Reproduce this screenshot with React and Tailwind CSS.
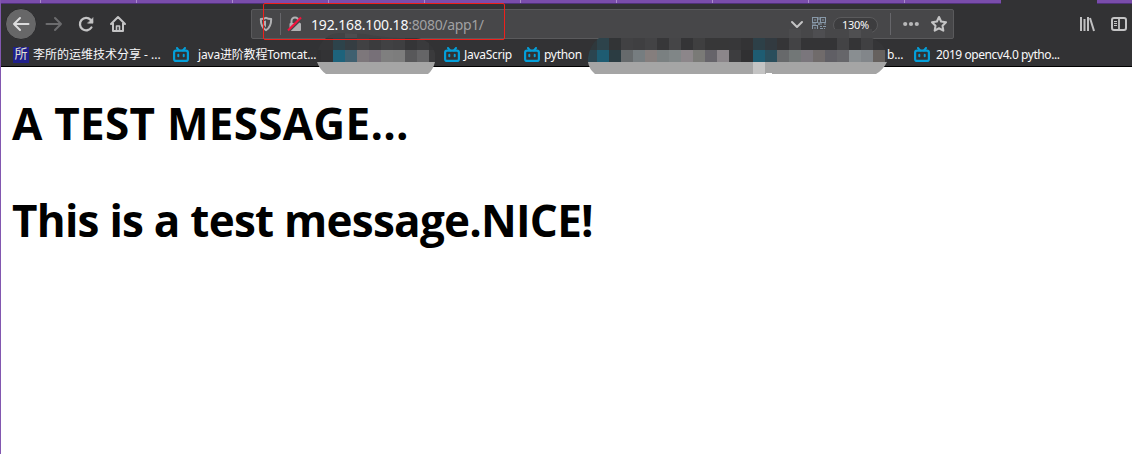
const TOP = [
  [585, "#2f383c"], [597, "#2d434b"], [609, "#323436"], [621, "#414143"], [633, "#3f3f41"], [645, "#434345"], [657, "#373739"], [669, "#454547"],
  [681, "#343436"], [693, "#3f3f40"], [705, "#373738"], [717, "#373738"], [729, "#373739"], [741, "#333335"], [753, "#2d4048"], [765, "#323a40"],
  [777, "#353537"], [789, "#434345"], [801, "#343436"], [813, "#343436"], [825, "#343436"], [837, "#434345"], [849, "#343436"], [861, "#404042"], [873, "#353537"],
];
const MID = [
  [585, "#2b4550"], [597, "#1e5c72"], [609, "#2b3c42"], [621, "#666a6c"], [633, "#767d80"], [645, "#857e7d"], [657, "#7a8081"], [669, "#808687"],
  [681, "#8c868a"], [693, "#7a7a77"], [705, "#66646a"], [717, "#8b868a"], [729, "#3d3d3f"], [741, "#303032"], [753, "#1e5c72"], [765, "#2a4e5c"],
  [777, "#67696b"], [789, "#727777"], [801, "#7a767c"], [813, "#706b6b"], [825, "#605f65"], [837, "#66666a"], [849, "#898e91"], [861, "#82868a"], [873, "#66615e"], [885, "#3a3a3c"],
];
const TOP1 = [
  [309, "#353537"], [321, "#353537"], [333, "#2d434b"], [345, "#353d42"], [357, "#414143"], [369, "#3b3b3d"], [381, "#414143"], [393, "#3f3f41"], [405, "#353537"], [417, "#3a3a3c"], [429, "#343436"],
];
const MID1 = [
  [309, "#303032"], [321, "#333335"], [333, "#1d637c"], [345, "#3f6070"], [357, "#7d777b"], [369, "#777078"], [381, "#7f7f7f"], [393, "#7d7d7d"], [405, "#58585a"], [417, "#656567"], [429, "#3a3a3c"],
];

function Tiles({ row, y }) {
  return row.map(([x, c]) => <rect key={x} x={x} y={y} width="12" height="12" fill={c} />);
}

function Mosaic() {
  return (
    <svg className="pointer-events-none absolute left-[-1px] top-0" width="1132" height="80" viewBox="0 0 1132 80" shapeRendering="crispEdges">
      <clipPath id="a"><path d="M317 55Q318 44 326 38Q331 33 341 33L365 34Q380 37 400 38H418Q432 41 435 53V62Q433 70 428 74H326Q320 70 317 62Z" /></clipPath>
      <g clipPath="url(#a)">
        <rect x="310" y="30" width="130" height="8" fill="#424244" />
        <rect x="345" y="32" width="12" height="6" fill="#4c4c4e" />
        <Tiles row={TOP1} y={38} />
        <Tiles row={MID1} y={50} />
        <rect x="310" y="62" width="130" height="12" fill="#a5a5a5" />
      </g>
      <clipPath id="b"><path d="M588 58Q590 44 599 38H780V29H872V38Q884 43 887 54V62Q883 70 876 74H595Q589 69 588 62Z" /></clipPath>
      <g clipPath="url(#b)">
        <rect x="580" y="28" width="310" height="10" fill="#474749" />
        <rect x="789" y="28" width="12" height="10" fill="#4b4b4d" />
        <rect x="813" y="30" width="12" height="8" fill="#4e4e51" />
        <rect x="849" y="30" width="12" height="8" fill="#4f4f51" />
        <Tiles row={TOP} y={38} />
        <Tiles row={MID} y={50} />
        <rect x="580" y="62" width="310" height="12" fill="#a5a5a5" />
        <rect x="753" y="62" width="12" height="12" fill="#c4c4c4" />
        <path d="M766 74v-1h4l3 1z" fill="#fff" />
      </g>
    </svg>
  );
}

function Bili() {
  return (
    <svg className="block shrink-0" width="16" height="16" viewBox="0 0 16 16" fill="none" stroke="#049fd9" strokeLinecap="round">
      <rect x="1.100" y="3.700" width="13.800" height="10.200" rx="2" strokeWidth="2.200" />
      <path d="M4 1 6 3.400M12 1 10 3.400M5.300 7.800v1.400M10.700 7.800v1.400" strokeWidth="2" />
    </svg>
  );
}

const stroke = { fill: "none", stroke: "#c4c4c5", strokeWidth: 2, strokeLinecap: "round", strokeLinejoin: "round" };

function NavBar() {
  return (
    <div className="flex h-[40px] items-center">
      <div className="ml-[4px] flex size-[32px] items-center justify-center rounded-full border border-[#2a2a2c] bg-[#676768]">
        <svg width="18" height="18" viewBox="0 0 18 18" {...stroke} stroke="#dcdcdd"><path d="M16.500 9H2M8 3 2 9l6 6" /></svg>
      </div>
      <svg className="ml-[8px]" width="18" height="18" viewBox="0 0 18 18" {...stroke} stroke="#6c6c6e"><path d="M1.500 9H16M10 3l6 6-6 6" /></svg>
      <svg className="ml-[14px]" width="18" height="18" viewBox="0 0 18 18" {...stroke} strokeWidth="2.300"><path d="M14.400 12.500A6.200 6.200 0 1 1 13.600 4.800L15 6.500" /><path d="M16 3v5.200h-5.200z" fill="#c4c4c5" strokeWidth="0.600" /></svg>
      <svg className="ml-[14px]" width="18" height="18" viewBox="0 0 18 18" {...stroke}><path d="M2 9 9 2l7 7M4 8v8h10V8" /><path d="M7.500 16v-5h3v5" strokeWidth="1.600" /></svg>
      <div className="ml-[124px] flex h-[30px] w-[703px] items-center rounded-[2px] border border-[#5a5a5c] bg-[#474749]">
        <svg className="ml-[6px]" width="16" height="16" viewBox="0 0 16 16" {...stroke} stroke="#b1b1b3"><path d="M8 1.800c1.800 1 3.600 1.200 5.200 1.200 0 6-1.200 9-5.200 11.200C4 12 2.800 9 2.800 3 4.400 3 6.200 2.800 8 1.800z" strokeWidth="2" /><path d="M8 4.600v6.800c-1.800-1.400-2.500-3.400-2.600-6.200z" fill="#b1b1b3" strokeWidth="0" /></svg>
        <div className="ml-[6px] h-[22px] w-px bg-[#66666a]" />
        <svg className="ml-[6px]" width="16" height="16" viewBox="0 0 16 16"><path d="M4.500 8V5a3.500 3.500 0 0 1 7 0v3" fill="none" stroke="#b1b1b3" strokeWidth="2" /><rect x="2.500" y="7" width="11.500" height="8" rx="1" fill="#b1b1b3" /><path d="M1 15.500 14.500 2.500" stroke="#474749" strokeWidth="3" /><path d="M1 14.500 14 1.500" stroke="#f5123e" strokeWidth="2.200" /></svg>
        <div className="ml-[8px] mt-[2px] whitespace-nowrap text-[14px] leading-[20px] tracking-[-0.250px] text-[#f9f9fa]"><span className="tracking-[-0.150px]">192.168.100.18</span><span className="tracking-[-0.350px] text-[#a0a0a2]">:8080/app1/</span></div>
        <div className="flex-1" />
        <svg width="14" height="14" viewBox="0 0 14 14" {...stroke}><path d="m2 5 5 5 5-5" /></svg>
        <svg className="ml-[8px]" width="14" height="14" viewBox="0 0 14 14" fill="none" stroke="#8798a8" strokeWidth="1.100"><path d="M.5.500h5v5h-5zM8.500.500h5v5h-5zM.5 8.500h5v5h-5zM2 3h2M10 3h2M2 11h2M7 0v3M7 5v3M0 7h4M6 7h4M12 7h2M8 9.500h2M11 9.500h3M8 11.500h3M8.500 13.500h2M12.500 11v3" /></svg>
        <div className="ml-[7px] mt-[2px] flex h-[16px] w-[45px] items-center justify-center rounded-full border border-[#5a5a5c] bg-[#3d3d3f] text-[11px] tracking-[-0.300px] text-[#f9f9fa]">130%</div>
        <div className="ml-[12px] h-[22px] w-px bg-[#66666a]" />
        <svg className="ml-[12px]" width="16" height="16" viewBox="0 0 16 16" fill="#b8b8b9"><circle cx="2.200" cy="8" r="2.100" /><circle cx="8" cy="8" r="2.100" /><circle cx="13.800" cy="8" r="2.100" /></svg>
        <svg className="ml-[11px] mr-[5px]" width="18" height="18" viewBox="0 0 18 18" {...stroke}><path d="m9 2 2.100 4.500 4.900.7-3.500 3.500.8 4.900L9 13.300l-4.300 2.300.8-4.900L2 7.200l4.900-.7z" strokeWidth="2.100" /></svg>
      </div>
      <svg className="ml-[125px]" width="16" height="16" viewBox="0 0 16 16" fill="none" stroke="#c0c0c1" strokeWidth="2"><path d="M2 1V15M5.500 3V15M9 1V15" /><path d="m11 2 4 13" /></svg>
      <svg className="ml-[16px]" width="16" height="16" viewBox="0 0 16 16" fill="none" stroke="#c4c4c5"><rect x="1" y="2" width="14" height="12" rx="2" strokeWidth="2" /><path d="M8 2v12" strokeWidth="1.800" /><path d="M3 5.500h3M3 7.500h3M3 9.500h3" /></svg>
    </div>
  );
}

export default function App() {
  return (
    <div className="relative h-[454px] w-[1132px] overflow-hidden border-l border-[#8257b0] bg-white font-['Noto_Sans','Noto_Sans_CJK_SC',sans-serif]">
      <div className="bg-[#323234]">
        <div className="flex h-[4px] border-b border-[#50327a] bg-[#7a4dab]">
          <div className="w-[40px] border-r border-[#a98acb]" />
          <div className="w-[96px] border-r border-[#a98acb]" />
          <div className="w-[96px] border-r border-[#a98acb]" />
          <div className="w-[96px] border-r border-[#a98acb]" />
          <div className="w-[96px] border-r border-[#a98acb]" />
          <div className="w-[96px] border-r border-[#a98acb]" />
          <div className="w-[96px] border-r border-[#a98acb]" />
          <div className="w-[96px] border-r border-[#a98acb]" />
          <div className="w-[96px] border-r border-[#a98acb]" />
          <div className="w-[96px] border-r border-[#a98acb]" />
          <div className="w-[96px]" />
          <div className="h-[4px] w-[96px] bg-[#323234]" />
        </div>
        <NavBar />
        <div className="flex h-[23px] items-center whitespace-nowrap border-b border-black text-[12px] leading-[16px] text-[#f9f9fa]">
          <div className="ml-[12px] flex size-[16px] items-center justify-center bg-[#20208c] pb-[2px] font-['Liberation_Serif','Noto_Sans_CJK_SC',serif] text-[13px] leading-[14px] text-[#e0e0d0]">所</div>
          <div className="ml-[4px] w-[140px]">李所的运维技术分享 - ...</div>
          <Bili />
          <div className="ml-[9px] w-[246px] tracking-[-0.180px]">java进阶教程Tomcat...</div>
          <Bili />
          <div className="ml-[4px] w-[60px] tracking-[-0.300px]">JavaScrip</div>
          <Bili />
          <div className="ml-[4px] w-[343px] tracking-[-0.300px]">python</div>
          <div className="w-[27px] tracking-[-0.200px]">b...</div>
          <Bili />
          <div className="ml-[6px] tracking-[-0.420px]">2019 opencv4.0 pytho...</div>
        </div>
      </div>
      <div className="flex flex-col pl-[11px] pt-[26px] font-['Open_Sans','Noto_Sans',sans-serif] text-[44px] font-bold leading-[60px] text-black">
        <h1 className="whitespace-nowrap tracking-[0.280px]">A TEST MESSAGE...</h1>
        <h1 className="mt-[37px] whitespace-nowrap tracking-[-0.750px]">This is a test message.NICE!</h1>
      </div>
      <Mosaic />
      <div className="absolute left-[262px] top-[3px] h-[37px] w-[242px] rounded-[2px] border border-solid border-[rgb(238,32,28)]" />
    </div>
  );
}
